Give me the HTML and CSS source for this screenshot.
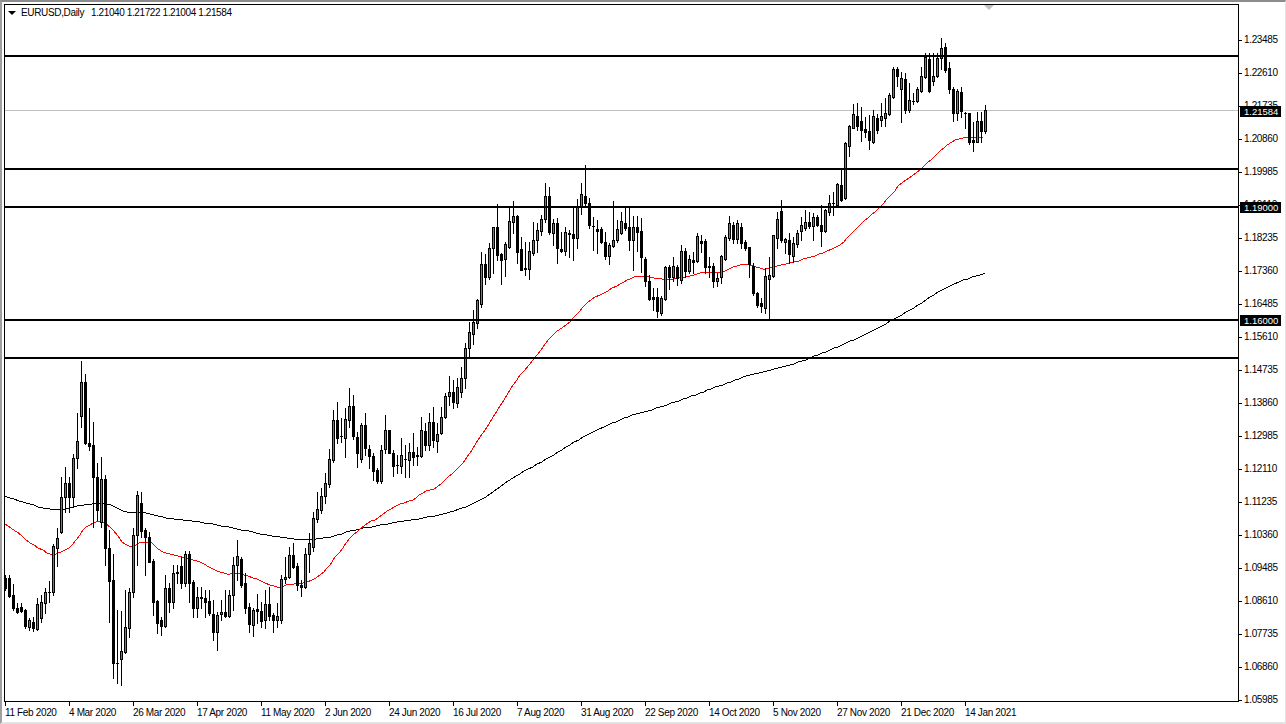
FILE: index.html
```html
<!DOCTYPE html>
<html lang="en">
<head>
<meta charset="utf-8">
<title>EURUSD,Daily</title>
<link rel="stylesheet" href="styles.css">
</head>
<body>
<div class="terminal">
  <div class="chart-grid">
    <div class="plot" id="plot">
      <div class="legend">
        <span class="legend-arrow"></span>
        <span class="legend-symbol">EURUSD,Daily</span>
        <span class="legend-ohlc">1.21040 1.21722 1.21004 1.21584</span>
      </div>
      <span class="shift-marker"></span>
    </div>
    <div class="price-axis">
      <span class="price">1.23485</span><span class="price">1.22610</span><span class="price price-under">1.21735</span>
      <span class="price">1.20860</span><span class="price">1.19985</span><span class="price price-under">1.19110</span>
      <span class="price">1.18235</span><span class="price">1.17360</span><span class="price">1.16485</span>
      <span class="price">1.15610</span><span class="price">1.14735</span><span class="price">1.13860</span>
      <span class="price">1.12985</span><span class="price">1.12110</span><span class="price">1.11235</span>
      <span class="price">1.10360</span><span class="price">1.09485</span><span class="price">1.08610</span>
      <span class="price">1.07735</span><span class="price">1.06860</span><span class="price">1.05985</span>
      <span class="tag tag-bid">1.21584</span>
      <span class="tag tag-a">1.19000</span>
      <span class="tag tag-b">1.16000</span>
    </div>
    <div class="date-axis">
      <span class="date">11 Feb 2020</span><span class="date">4 Mar 2020</span><span class="date">26 Mar 2020</span>
      <span class="date">17 Apr 2020</span><span class="date">11 May 2020</span><span class="date">2 Jun 2020</span>
      <span class="date">24 Jun 2020</span><span class="date">16 Jul 2020</span><span class="date">7 Aug 2020</span>
      <span class="date">31 Aug 2020</span><span class="date">22 Sep 2020</span><span class="date">14 Oct 2020</span>
      <span class="date">5 Nov 2020</span><span class="date">27 Nov 2020</span><span class="date">21 Dec 2020</span>
      <span class="date">14 Jan 2021</span>
    </div>
  </div>
</div>
<script src="chart.js"></script>
</body>
</html>
```
FILE: styles.css
```css
html, body {
  margin: 0;
  padding: 0;
  background: #fff;
  overflow: hidden;
}
.terminal {
  box-sizing: border-box;
  width: 1286px;
  height: 724px;
  padding: 2px 0 0 2px;
  background: #fff;
  border-top: 2px solid #8c8c8c;
  border-left: 2px solid #a0a0a0;
  border-right: 1px solid #e3e3e3;
  border-bottom: 2px solid #e3e3e3;
  font-family: "Liberation Sans", Arial, sans-serif;
  font-size: 10px;
  letter-spacing: -0.35px;
  color: #000;
}
.chart-grid {
  display: grid;
  grid-template-columns: 1235px 1fr;
  grid-template-rows: 698px 1fr;
}
.plot {
  position: relative;
  box-sizing: border-box;
  border: 1px solid #000;
  overflow: hidden;
}
.plot svg {
  display: block;
  width: 1233px;
  height: 696px;
}
.legend {
  position: absolute;
  left: 3px;
  top: 1px;
  display: flex;
  align-items: center;
  white-space: nowrap;
  line-height: 14px;
}
.legend-arrow {
  width: 0;
  height: 0;
  margin-right: 5px;
  border-left: 4px solid transparent;
  border-right: 4px solid transparent;
  border-top: 4px solid #000;
}
.legend-symbol {
  margin-right: 7px;
}
.legend-ohlc {
  letter-spacing: -0.4px;
}
.shift-marker {
  position: absolute;
  left: 978px;
  top: -1px;
  width: 0;
  height: 0;
  border-left: 6px solid transparent;
  border-right: 6px solid transparent;
  border-top: 6px solid #c0c0c0;
}
.price-axis {
  position: relative;
  display: grid;
  grid-template-rows: repeat(21, 33.03px);
  padding-top: 19px;
  height: 698px;
  box-sizing: border-box;
}
.price {
  position: relative;
  display: flex;
  align-items: center;
  padding-left: 5px;
  line-height: 12px;
  white-space: nowrap;
}
.price::before {
  content: "";
  position: absolute;
  left: 0;
  top: 50%;
  width: 3px;
  height: 1px;
  background: #000;
}
.tag {
  position: absolute;
  left: 1px;
  z-index: 1;
  width: 41px;
  height: 11px;
  padding-left: 4px;
  box-sizing: border-box;
  background: #000;
  color: #fff;
  font-size: 9.5px;
  letter-spacing: 0;
  line-height: 11px;
  white-space: nowrap;
}
.tag-bid { top: 102px; }
.tag-a { top: 198px; }
.tag-b { top: 311px; }
.date-axis {
  grid-column: 1 / -1;
  display: flex;
  padding-left: 1px;
}
.date {
  position: relative;
  flex: 0 0 64px;
  padding-top: 4px;
  line-height: 14px;
  white-space: nowrap;
}
.date::before {
  content: "";
  position: absolute;
  left: 0;
  top: 0;
  width: 1px;
  height: 4px;
  background: #000;
}
```
FILE: chart.js
```js
// Each candle: [body top, body bottom, wick high, wick low, bullish?]
var C = [
[578,588,575,590,0],[578,596,575,597,0],[595,608,584,610,0],[608,612,603,613,0],[607,611,603,612,0],[610,626,609,628,0],[620,627,618,630,1],[622,628,617,631,0],[604,629,598,630,1],[602,618,595,622,1],
[592,603,588,613,1],[592,592,581,602,0],[546,592,544,595,1],[538,548,528,566,1],[497,532,477,533,1],[483,497,467,512,1],[483,497,477,512,0],[458,497,454,507,1],[441,458,413,468,1],[382,416,361,427,1],
[382,443,374,444,0],[443,446,408,450,0],[445,477,422,527,0],[477,510,463,520,0],[479,522,457,527,1],[479,548,475,565,0],[548,581,530,622,0],[580,663,554,678,0],[663,663,610,683,0],[651,659,611,685,1],
[627,652,590,653,1],[592,628,588,637,1],[535,592,528,597,1],[495,535,491,565,1],[503,531,492,537,0],[530,537,528,575,0],[537,562,532,562,0],[561,602,559,615,0],[601,623,600,633,0],[620,626,617,635,0],
[588,626,575,627,1],[588,602,583,612,0],[573,602,565,608,1],[572,573,565,583,0],[566,583,557,588,0],[554,583,551,586,1],[554,583,551,602,0],[582,608,580,617,0],[597,608,587,617,1],[597,598,587,608,0],
[598,602,590,617,0],[601,613,590,615,0],[614,632,600,640,0],[615,632,612,650,1],[612,614,600,620,1],[612,616,590,617,0],[595,616,590,617,1],[565,595,557,610,1],[556,565,540,580,1],[559,585,557,587,0],
[583,608,573,613,0],[607,624,603,632,0],[610,625,608,636,1],[609,611,594,623,0],[611,621,602,627,0],[604,620,590,628,1],[604,616,587,620,0],[615,620,613,632,0],[616,620,603,627,1],[579,620,575,623,1],
[577,579,557,583,1],[555,577,547,578,1],[555,567,543,568,0],[566,585,563,590,0],[585,587,580,596,0],[554,587,548,588,1],[543,554,533,572,1],[518,547,512,551,1],[509,519,492,522,1],[496,510,488,513,1],
[483,496,473,503,1],[459,484,449,487,1],[420,460,410,462,1],[420,438,402,443,0],[436,436,418,442,0],[419,438,408,457,1],[406,420,388,427,1],[406,436,395,439,0],[437,453,432,467,0],[425,459,423,462,1],
[425,448,413,455,0],[449,456,445,468,0],[456,471,453,480,0],[470,481,468,483,0],[450,481,445,483,1],[430,449,415,453,1],[430,453,430,453,0],[453,466,450,476,0],[465,465,455,473,0],[455,466,438,473,1],
[459,459,445,477,0],[452,460,443,477,1],[452,457,433,465,0],[455,456,447,465,0],[430,456,417,457,1],[431,445,423,450,0],[422,445,413,450,1],[422,440,407,447,0],[434,441,423,452,1],[417,433,407,434,1],
[396,417,393,418,1],[392,396,376,405,1],[392,402,380,408,0],[387,403,378,407,1],[378,392,367,397,1],[348,378,343,388,1],[332,348,322,358,1],[322,334,310,344,1],[300,323,299,328,1],[264,304,252,307,1],
[264,277,254,284,0],[248,277,243,279,1],[227,248,227,273,1],[227,255,204,260,0],[254,260,253,284,0],[244,259,242,276,1],[221,247,207,248,1],[216,222,201,233,1],[216,252,215,263,0],[249,270,237,270,0],
[268,269,242,275,0],[251,269,242,279,1],[240,253,222,255,1],[230,240,223,252,1],[219,231,215,235,1],[196,219,183,222,1],[196,232,187,234,0],[223,233,219,245,1],[223,248,218,263,0],[249,251,232,252,0],
[232,251,227,255,1],[233,234,230,257,0],[234,238,208,260,0],[207,238,199,248,1],[194,206,183,214,1],[196,203,165,205,0],[203,225,198,228,0],[226,226,217,250,0],[229,231,220,253,0],[229,242,227,243,0],
[242,256,232,259,0],[245,256,243,264,1],[240,246,201,247,1],[229,240,220,242,1],[221,233,212,234,1],[223,228,208,230,0],[227,240,207,250,0],[227,240,216,270,1],[227,232,216,251,0],[231,257,218,272,0],
[259,281,257,286,0],[281,299,275,300,0],[297,299,288,310,0],[297,311,288,317,0],[298,313,296,315,1],[267,299,266,300,1],[267,277,265,289,0],[266,277,257,281,1],[267,278,265,285,0],[251,280,245,283,1],
[251,271,248,277,0],[259,271,255,273,1],[260,262,252,273,0],[236,261,233,262,1],[241,243,235,252,0],[241,267,239,273,0],[266,267,257,277,0],[266,281,263,287,0],[278,281,273,286,1],[256,277,255,283,1],
[237,259,235,260,1],[223,238,216,240,1],[225,239,222,243,0],[223,239,220,243,1],[227,243,223,248,0],[242,248,240,250,0],[247,264,247,277,0],[266,293,263,295,0],[293,305,292,307,0],[303,306,298,312,0],
[276,308,268,313,1],[275,279,257,319,1],[235,276,235,277,1],[219,238,212,248,1],[211,240,200,242,0],[239,242,238,253,1],[240,254,233,263,0],[243,256,237,262,1],[233,244,230,247,1],[225,231,217,240,1],
[222,228,210,230,1],[222,226,212,228,0],[217,226,213,240,1],[217,225,215,226,0],[225,231,205,246,0],[210,231,209,232,1],[203,212,195,215,1],[203,203,192,215,0],[184,205,183,206,1],[185,200,169,201,0],
[143,198,142,199,1],[126,146,125,156,1],[114,128,104,128,1],[116,126,103,130,0],[121,130,107,141,0],[129,132,117,137,0],[131,140,115,149,0],[116,142,110,143,1],[118,130,114,133,0],[116,120,103,126,1],
[113,118,98,126,1],[95,114,93,115,1],[69,97,67,98,1],[69,76,67,86,0],[78,89,72,122,1],[79,110,73,113,0],[100,110,83,112,1],[101,101,93,104,0],[89,101,87,102,1],[76,91,67,92,1],
[57,77,53,78,1],[59,91,53,92,0],[76,81,53,85,1],[58,76,53,77,1],[48,58,38,69,1],[47,70,43,72,0],[68,89,62,93,0],[89,113,87,121,0],[91,113,89,120,1],[92,111,87,117,0],
[113,113,112,128,0],[113,142,113,144,0],[140,142,122,151,0],[121,142,112,142,1],[121,131,112,142,0],[110,131,105,133,1]
];
var RED = "5,524 17,532 30,543 50,554 58,553 72,545 83,530 93,523 103,522 113,530 122,542 132,546 143,542 152,543 163,552 185,558 200,562 213,569 227,574 237,573 253,578 277,587 290,584 307,582 320,575 330,565 335,557 343,548 350,538 360,529 368,523 378,518 387,511 400,504 413,500 423,493 437,487 445,480 463,463 480,437 493,417 507,395 517,380 533,360 553,335 570,322 587,303 600,295 620,284 630,279 638,276 647,276 662,279 677,278 697,274 703,272 720,272 733,267 747,264 753,266 763,269 773,267 790,263 807,258 823,253 840,245 850,235 860,225 865,220 880,207 902,183 920,170 947,145 963,138 983,137";
var BLACK = "5,496 23,502 50,509 70,508 88,504 107,504 127,512 143,512 163,517 200,522 233,528 267,535 290,538 300,539 323,538 337,535 350,531 360,529 380,525 397,522 423,518 450,512 470,505 490,494 513,478 550,457 587,435 628,417 660,407 700,393 750,375 790,365 830,350 870,332 910,310 950,286 985,273";
var LEVELS = [55, 168, 206, 319, 357];

// Resample a coarse polyline onto the 4px bar grid with a Catmull-Rom curve.
function smooth(str) {
  var p = str.split(" ").map(function (s) { return s.split(",").map(Number); });
  var out = [];
  for (var i = 0; i < p.length - 1; i++) {
    var a = p[i - 1] || p[i], b = p[i], c = p[i + 1], d = p[i + 2] || c;
    var steps = Math.max(1, Math.round((c[0] - b[0]) / 4));
    for (var s = 0; s < steps; s++) {
      var t = s / steps, t2 = t * t, t3 = t2 * t;
      var f = function (k) {
        return 0.5 * (2 * b[k] + (c[k] - a[k]) * t + (2 * a[k] - 5 * b[k] + 4 * c[k] - d[k]) * t2 + (3 * b[k] - a[k] - 3 * c[k] + d[k]) * t3);
      };
      out.push(Math.round(f(0)) + "," + Math.round(f(1)));
    }
  }
  out.push(p[p.length - 1].join(","));
  return out.join(" ");
}

function buildChart() {
  var wicks = "", dark = "", fill = "", levels = "";
  C.forEach(function (c, i) {
    var x = 5 + 4 * i;
    wicks += "M" + x + " " + c[2] + "h1V" + (c[3] + 1) + "h-1z";
    var h = Math.max(c[1] - c[0], 0) + 1;
    dark += "M" + (x - 1) + " " + c[0] + "h3v" + h + "h-3z";
    if (c[4] && h > 2) fill += "M" + x + " " + (c[0] + 1) + "h1v" + (h - 2) + "h-1z";
  });
  LEVELS.forEach(function (y) {
    levels += '<rect x="5" y="' + y + '" width="1233" height="2" fill="#000"/>';
  });
  var svg =
    '<svg xmlns="http://www.w3.org/2000/svg" viewBox="5 5 1233 696" shape-rendering="crispEdges">' +
    '<rect x="5" y="110" width="1233" height="1" fill="#c0c0c0"/>' +
    '<polyline points="' + smooth(BLACK) + '" fill="none" stroke="#000" stroke-width="1"/>' +
    '<polyline points="' + smooth(RED) + '" fill="none" stroke="#f00" stroke-width="1"/>' +
    '<path d="' + wicks + dark + '" fill="#000"/>' +
    '<path d="' + fill + '" fill="#00c81e"/>' +
    levels +
    "</svg>";
  document.getElementById("plot").insertAdjacentHTML("afterbegin", svg);
}
buildChart();
```
